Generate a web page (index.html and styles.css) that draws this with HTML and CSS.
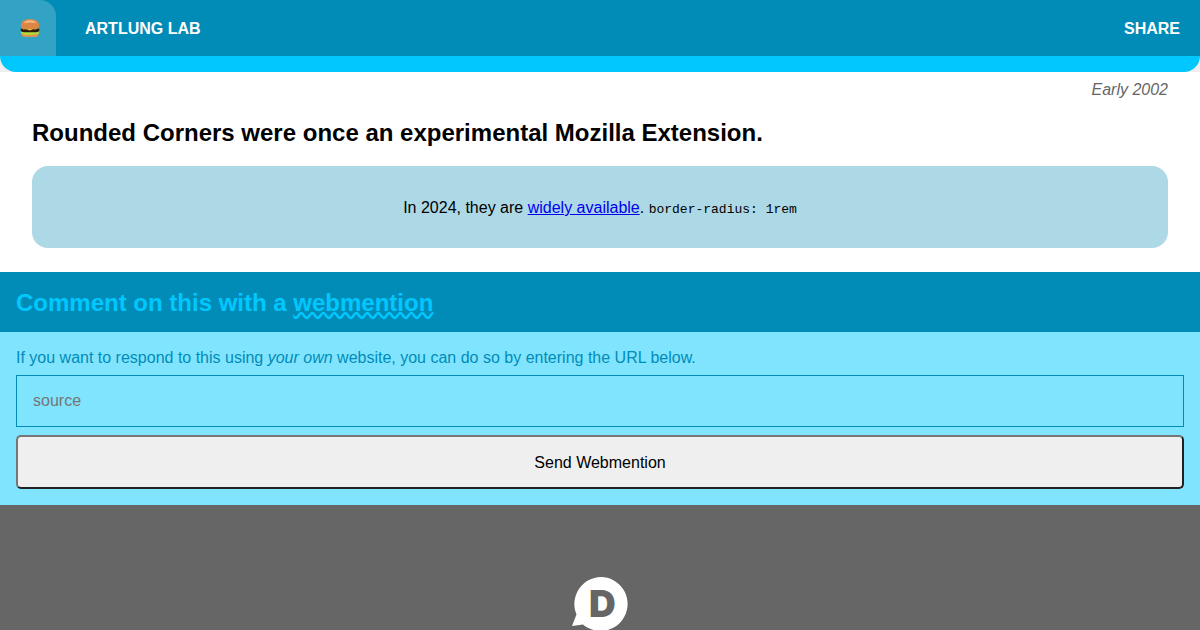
FILE: index.html
```html
<!DOCTYPE html>
<html lang="en">
<head>
<meta charset="utf-8">
<meta name="viewport" content="width=device-width, initial-scale=1">
<title>Rounded Corners - Artlung Lab</title>
<link rel="stylesheet" href="styles.css">
</head>
<body>
<header class="site-header">
  <nav class="site-nav">
    <button class="menu-button" type="button" aria-label="Menu">
      <svg class="burger" viewBox="0 0 20 20" aria-hidden="true">
        <path d="M1.500 14h17v2q0 3-3.500 3h-10q-3.500 0-3.500-3z" fill="#dc9450"/>
        <path d="M1 13h18q.6 2-.8 2.700l-2.200.8-2-.2-2.200.7-2-.5-2.400.5-2.500-.5-2-.2q-2.400-.8-2.200-3.300z" fill="#b4e03c"/>
        <path d="M1 10.500h18q.8 1.500 0 2.800-1.500 1-3 1h-12q-1.500 0-3-1-.8-1.300 0-2.800z" fill="#2b1a10"/>
        <path d="M1.500 10.200h17l-3 1.200-2.500-.2-3 1.400-4-1.400-2.500.2z" fill="#f2b232"/>
        <path d="M.8 8q0-7 9.200-7t9.200 7q-.3 2.600-2 2.600h-14.400q-1.700 0-2-2.600z" fill="#de8545"/>
        <path d="M3.500 5.300q2-3 6.500-3t6.500 3q-6.500-1.500-13 0z" fill="#f4ba86"/>
      </svg>
    </button>
    <a class="brand" href="#">ARTLUNG LAB</a>
    <a class="share" href="#">SHARE</a>
  </nav>
</header>
<main class="content">
  <div class="date">Early 2002</div>
  <h1 class="title">Rounded Corners were once an experimental Mozilla Extension.</h1>
  <div class="demo">In 2024, they are <a href="#">widely available</a>. <code class="code">border-radius: 1rem</code></div>
</main>
<section class="webmention">
  <h2 class="webmention-title">Comment on this with a <a class="wavy" href="#">webmention</a></h2>
  <form class="webmention-form">
    <label for="source">If you want to respond to this using <em>your own</em> website, you can do so by entering the URL below.</label>
    <input class="source" id="source" type="url" placeholder="source">
    <button class="send" type="button">Send Webmention</button>
  </form>
</section>
<footer class="site-footer">
  <svg class="disqus" viewBox="0 0 56 56" role="img" aria-label="Disqus">
    <path d="M29 1a27 27 0 1 1-18 47.500L0 50l4.500-11.500A27 27 0 0 1 29 1z" fill="#fff"/>
    <text class="disqus-letter" x="17" y="41">D</text>
  </svg>
</footer>
</body>
</html>
```
FILE: styles.css
```css
* {
  box-sizing: border-box;
}

body {
  margin: 0;
  min-height: 100vh;
  display: flex;
  flex-direction: column;
  background: #eee;
  color: #000;
  font: 16px/18px "Liberation Sans", Arial, sans-serif;
}

.site-header {
  padding-bottom: 16px;
  background: #00c8ff;
  border-radius: 0 0 16px 16px;
}

.site-nav {
  display: flex;
  align-items: center;
  height: 56px;
  padding-right: 20px;
  background: #008cb7;
}

.menu-button {
  display: grid;
  place-items: center;
  width: 56px;
  height: 56px;
  padding: 0 0 0 4px;
  border: 0;
  border-radius: 0 16px 0 0;
  background: #33a3c5;
}

.burger {
  display: block;
  width: 20px;
  height: 20px;
}

.brand,
.share {
  padding-top: 2px;
  color: #fff;
  font-weight: bold;
  text-decoration: none;
}

.brand {
  margin-left: 29px;
}

.share {
  margin-left: auto;
}

.content {
  padding: 9px 32px 24px;
  background: #fff;
}

.date {
  color: #666;
  font-style: italic;
  text-align: right;
}

.title {
  margin: 20px 0 19px;
  font-size: 24px;
  line-height: 28px;
}

.demo {
  padding: 33px 32px 31px;
  border-radius: 16px;
  background: #add8e6;
  text-align: center;
}

.demo a {
  color: #00e;
}

.code {
  font: 13px/13px "Liberation Mono", "Courier New", monospace;
}

.webmention {
  background: #80e4ff;
  color: #008cb7;
}

.webmention-title {
  margin: 0;
  padding: 17px 16px 15px;
  background: #008cb7;
  color: #00c8ff;
  font-size: 24px;
  line-height: 28px;
}

.wavy {
  color: inherit;
  text-decoration: underline wavy;
  text-underline-offset: 1px;
}

.webmention-form {
  display: grid;
  gap: 8px;
  padding: 17px 16px 16px;
}

.source {
  width: 100%;
  height: 52px;
  padding: 16px;
  border: 1px solid #008cb7;
  background: transparent;
  font: inherit;
}

.source::placeholder {
  color: #757575;
}

.send {
  height: 54px;
  padding: 17px 16px 15px;
  border: 2px solid;
  border-color: #767676 #212121 #212121 #767676;
  border-radius: 5px;
  background: #efefef;
  color: #000;
  font: inherit;
}

.site-footer {
  flex: 1;
  display: flex;
  justify-content: center;
  height: 125px;
  padding-top: 71px;
  overflow: hidden;
  background: #666;
}

.disqus {
  flex: none;
  width: 56px;
  height: 56px;
}

.disqus-letter {
  fill: #666;
  font: 900 37px Inter, sans-serif;
}
```
